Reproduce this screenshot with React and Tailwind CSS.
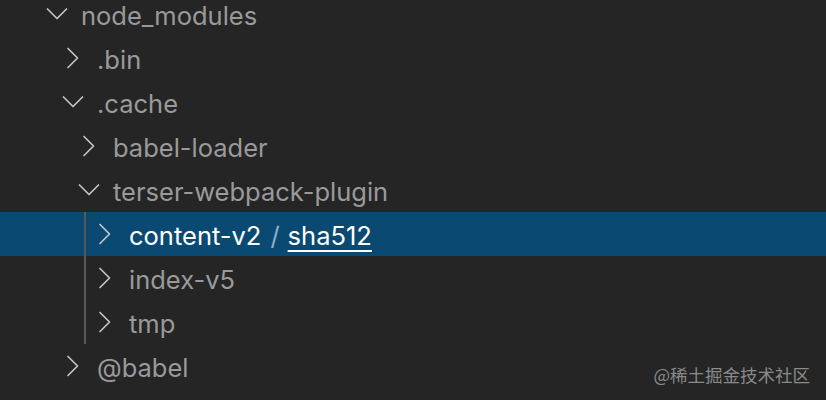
import React from 'react';

const tree = [
  { name: 'node_modules', level: 0, open: true },
  { name: '.bin', level: 1, open: false },
  { name: '.cache', level: 1, open: true },
  { name: 'babel-loader', level: 2, open: false },
  { name: 'terser-webpack-plugin', level: 2, open: true },
  { name: 'content-v2', sub: 'sha512', level: 3, open: false, selected: true, guide: true },
  { name: 'index-v5', level: 3, open: false, guide: true },
  { name: 'tmp', level: 3, open: false, guide: true },
  { name: '@babel', level: 1, open: false },
];

const Chevron = ({ open }) => (
  <svg width="32" height="32" viewBox="0 0 32 32" fill="none" stroke="#c5c5c5" strokeWidth="1.7" strokeLinecap="round" strokeLinejoin="round">
    {open ? <polyline points="6.5,11 16,20.5 25.5,11" /> : <polyline points="11,6.5 20.5,16 11,25.5" />}
  </svg>
);

const indents = ['pl-[41px]', 'pl-[57px]', 'pl-[73px]', 'pl-[89px]'];

const Row = ({ item }) => (
  <div className={`relative h-[44px] flex items-center ${indents[item.level]} ${item.selected ? 'bg-[#0a4a72]' : ''}`}>
    {item.guide && <div className="absolute left-[84px] top-0 bottom-0 w-[2px] bg-[#585858]" />}
    <Chevron open={item.open} />
    <span className={`ml-[8px] translate-y-[2px] text-[25.5px] whitespace-nowrap ${item.selected ? 'text-white' : 'text-[#9a9a9a]'}`}>
      {item.name}
      {item.sub && (
        <>
          <span className="text-[#8fb0c8] ml-[9px] mr-[8px]">/</span>
          <span className="underline underline-offset-[5px] decoration-[2px]">{item.sub}</span>
        </>
      )}
    </span>
  </div>
);

export default function App() {
  return (
    <div className="relative w-[826px] h-[400px] overflow-hidden bg-[#252526]" style={{ fontFamily: 'Inter, "Noto Sans", sans-serif' }}>
      <div className="-mt-[8px]">
        {tree.map((item, i) => (
          <Row key={i} item={item} />
        ))}
      </div>
      <div className="absolute right-[16px] bottom-[13px] text-[17.5px] leading-[24px] text-[#8a8a8a]" style={{ fontFamily: '"Noto Sans CJK SC", sans-serif' }}>
        @稀土掘金技术社区
      </div>
    </div>
  );
}
